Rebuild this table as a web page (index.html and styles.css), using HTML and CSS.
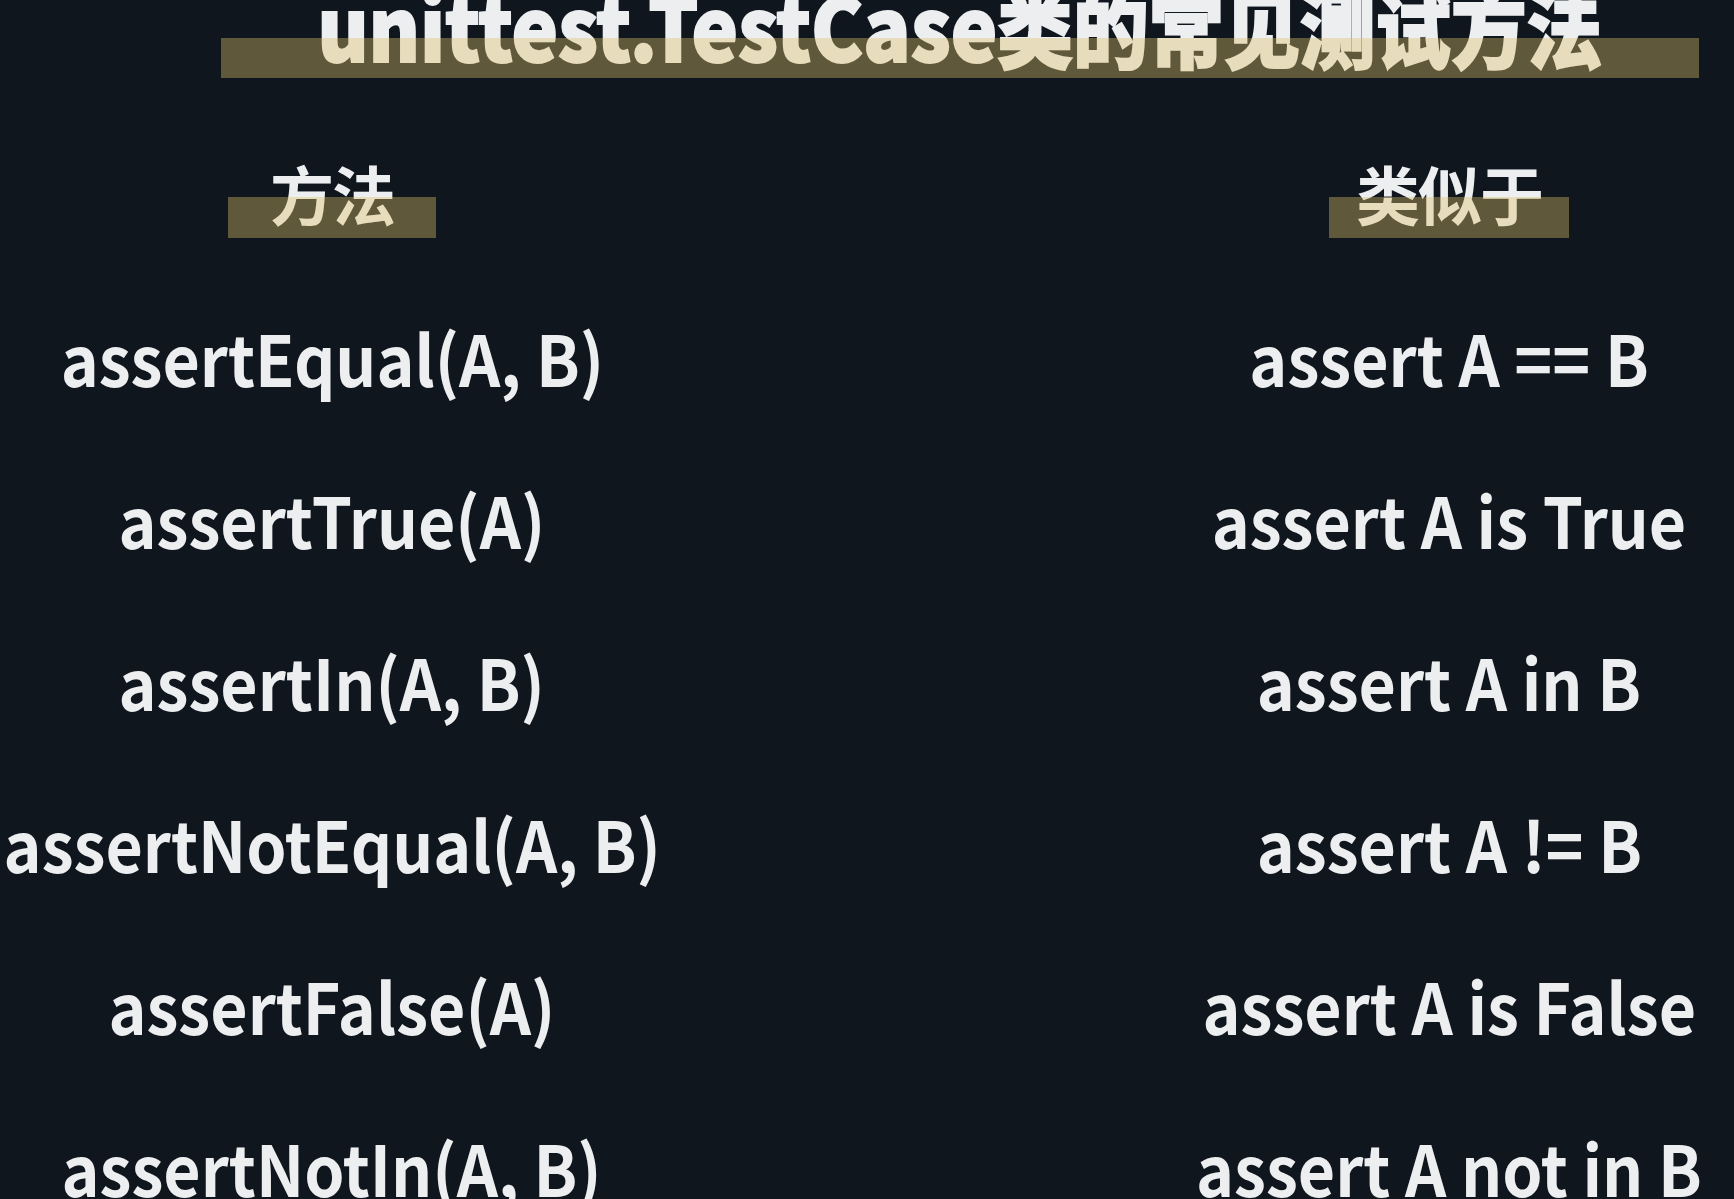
FILE: index.html
```html
<!DOCTYPE html>
<html lang="zh-CN">
<head>
<meta charset="utf-8">
<title>unittest.TestCase类的常见测试方法</title>
<link rel="stylesheet" href="styles.css">
</head>
<body>
<main class="slide">
  <h1 class="title"><span class="title-text"><span class="title-latin">unittest.TestCase</span><span class="title-cjk">类的常见测试方法</span></span></h1>
  <section class="table">
    <div class="col col-left">
      <div class="head"><span class="head-label head-label-left">方法</span></div>
      <div class="cell">assertEqual(A, B)</div>
      <div class="cell">assertTrue(A)</div>
      <div class="cell">assertIn(A, B)</div>
      <div class="cell">assertNotEqual(A, B)</div>
      <div class="cell">assertFalse(A)</div>
      <div class="cell">assertNotIn(A, B)</div>
    </div>
    <div class="col col-right">
      <div class="head"><span class="head-label head-label-right">类似于</span></div>
      <div class="cell">assert A == B</div>
      <div class="cell">assert A is True</div>
      <div class="cell">assert A in B</div>
      <div class="cell">assert A != B</div>
      <div class="cell">assert A is False</div>
      <div class="cell">assert A not in B</div>
    </div>
  </section>
</main>
</body>
</html>
```

FILE: styles.css
```css
html, body {
  margin: 0;
  padding: 0;
  background: #10161e;
  height: 100%;
  overflow: hidden;
}

.slide {
  width: 1734px;
  height: 1199px;
  display: flex;
  flex-direction: column;
  font-family: "Noto Sans CJK SC", "Noto Sans", sans-serif;
  font-weight: 700;
  color: #eceef0;
}

/* ---------- title ---------- */
.title {
  position: relative;
  flex: none;
  width: 1478px;
  height: 128px;
  margin: -20px 0 0 221px;
  font-size: 88px;
  line-height: 88px;
  font-weight: 900;
  text-align: center;
  white-space: nowrap;
}

.title-text {
  display: inline-block;
  transform: scaleX(0.9);
  transform-origin: 50% 50%;
  -webkit-text-stroke: 2px #eceef0;
}

.title-latin {
  font-size: 87px;
}

.title-cjk {
  font-size: 84px;
}

.title::after {
  content: "";
  position: absolute;
  left: 0;
  right: 0;
  top: 58px;
  height: 40px;
  background: rgba(225, 193, 103, 0.39);
}

/* ---------- two-column table ---------- */
.table {
  display: grid;
  grid-template-columns: 664px 570px;
  column-gap: 500px;
}

.col {
  display: flex;
  flex-direction: column;
  align-items: center;
}

.head {
  height: 168px;
  display: flex;
  align-items: center;
  justify-content: center;
}

.head-label {
  position: relative;
  display: block;
  font-size: 64px;
  line-height: 64px;
  letter-spacing: -2px;
  text-align: center;
}

.head-label::after {
  content: "";
  position: absolute;
  left: 0;
  right: 0;
  top: 37px;
  height: 41px;
  background: rgba(225, 193, 103, 0.39);
}

.head-label-left {
  width: 208px;
}

.head-label-right {
  width: 240px;
}

.cell {
  height: 162px;
  font-size: 70px;
  line-height: 162px;
  text-align: center;
  white-space: nowrap;
  transform: scaleX(0.92);
  transform-origin: 50% 50%;
}
```
